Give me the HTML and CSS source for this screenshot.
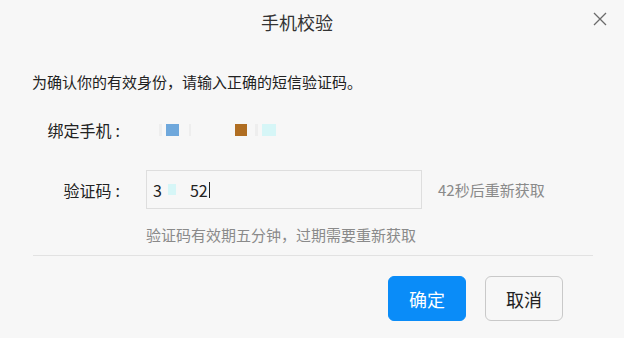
FILE: index.html
```html
<!DOCTYPE html>
<html lang="zh-CN">
<head>
<meta charset="utf-8">
<title>手机校验</title>
<link rel="stylesheet" href="styles.css">
</head>
<body>
<div class="dialog">
  <div class="header">
    <span class="title">手机校验</span>
    <button class="close" aria-label="关闭">
      <svg width="14" height="14" viewBox="0 0 14 14"><path d="M1 1L13 13M13 1L1 13" stroke="#6b6b6b" stroke-width="1.3" fill="none"/></svg>
    </button>
  </div>
  <p class="intro">为确认你的有效身份，请输入正确的短信验证码。</p>
  <div class="row phone-row">
    <span class="label">绑定手机<span class="colon">:</span></span>
    <span class="masked">
      <i class="blk faint w4"></i><i class="blk blue"></i><i class="blk faint w2"></i><i class="blk gap"></i><i class="blk brown"></i><i class="blk faint w4"></i><i class="blk cyan"></i>
    </span>
  </div>
  <div class="row code-row">
    <span class="label">验证码<span class="colon">:</span></span>
    <div class="input"><span>3</span><i class="blk cyan small"></i><span class="spacer"></span><span>52</span><span class="caret"></span></div>
    <span class="resend">42秒后重新获取</span>
  </div>
  <p class="hint">验证码有效期五分钟，过期需要重新获取</p>
  <div class="divider"></div>
  <div class="actions">
    <button class="btn primary">确定</button>
    <button class="btn">取消</button>
  </div>
</div>
</body>
</html>
```
FILE: styles.css
```css
* { box-sizing: border-box; }
html, body { margin: 0; padding: 0; }
body {
  background: #f7f7f7;
  font-family: "Noto Sans CJK SC", "Noto Sans", sans-serif;
  color: #333;
  width: 624px;
  height: 338px;
  overflow: hidden;
}
.dialog { position: relative; }
.header {
  height: 44px;
  display: flex;
  justify-content: center;
  align-items: center;
  padding-right: 30px;
}
.title { font-size: 18px; color: #333; }
.close {
  position: absolute;
  top: 12px;
  right: 17px;
  border: 0;
  padding: 0;
  background: none;
  width: 14px;
  height: 14px;
  display: block;
}
.close svg { display: block; }
.intro {
  margin: 26px 0 0 32px;
  font-size: 15px;
  line-height: 24px;
  color: #222;
}
.row { display: flex; align-items: center; }
.label {
  width: 122px;
  text-align: right;
  font-size: 16px;
  color: #222;
  flex: none;
  padding-right: 2px;
}
.colon { margin-left: 4px; }
.phone-row { margin-top: 24px; height: 24px; }
.masked { display: flex; align-items: center; margin-left: 33px; height: 12px; }
.blk { display: block; height: 12px; width: 12px; flex: none; }
.blk.faint { background: #eeeeee; width: 3px; margin-right: 4px; }
.blk.w2 { width: 2px; margin-left: 4px; }
.blk.w4 { width: 3px; margin-left: 4px; }
.blk.blue { background: #6fa8dc; width: 13px; margin-right: 6px; }
.blk.gap { background: transparent; width: 40px; }
.blk.brown { background: #b06e22; margin-right: 4px; }
.blk.cyan { background: #d6f6f7; width: 14px; }
.blk.cyan.small { width: 8px; height: 11px; margin-left: 6px; }
.code-row { margin-top: 28px; }
.input {
  margin-left: 24px;
  width: 276px;
  height: 39px;
  border: 1px solid #dedede;
  background: #f7f7f7;
  display: flex;
  align-items: center;
  padding-left: 6px;
  font-size: 16px;
  color: #222;
}
.spacer { width: 14px; }
.caret { width: 1px; height: 16px; background: #222; margin-left: 1px; }
.resend { margin-left: 16px; font-size: 15px; color: #8a8a8a; }
.hint {
  margin: 16px 0 0 146px;
  font-size: 15px;
  line-height: 20px;
  color: #8a8a8a;
}
.divider {
  margin: 10px 31px 0 33px;
  height: 1px;
  background: #e2e2e2;
}
.actions {
  margin-top: 20px;
  display: flex;
  justify-content: flex-end;
  gap: 19px;
  padding-right: 61px;
}
.btn {
  width: 78px;
  height: 45px;
  border-radius: 6px;
  border: 1px solid #c9c9c9;
  background: transparent;
  font-family: inherit;
  font-size: 18px;
  color: #222;
  padding: 0;
}
.btn.primary {
  background: #0a8cf8;
  border-color: #0a8cf8;
  color: #fff;
}
```
